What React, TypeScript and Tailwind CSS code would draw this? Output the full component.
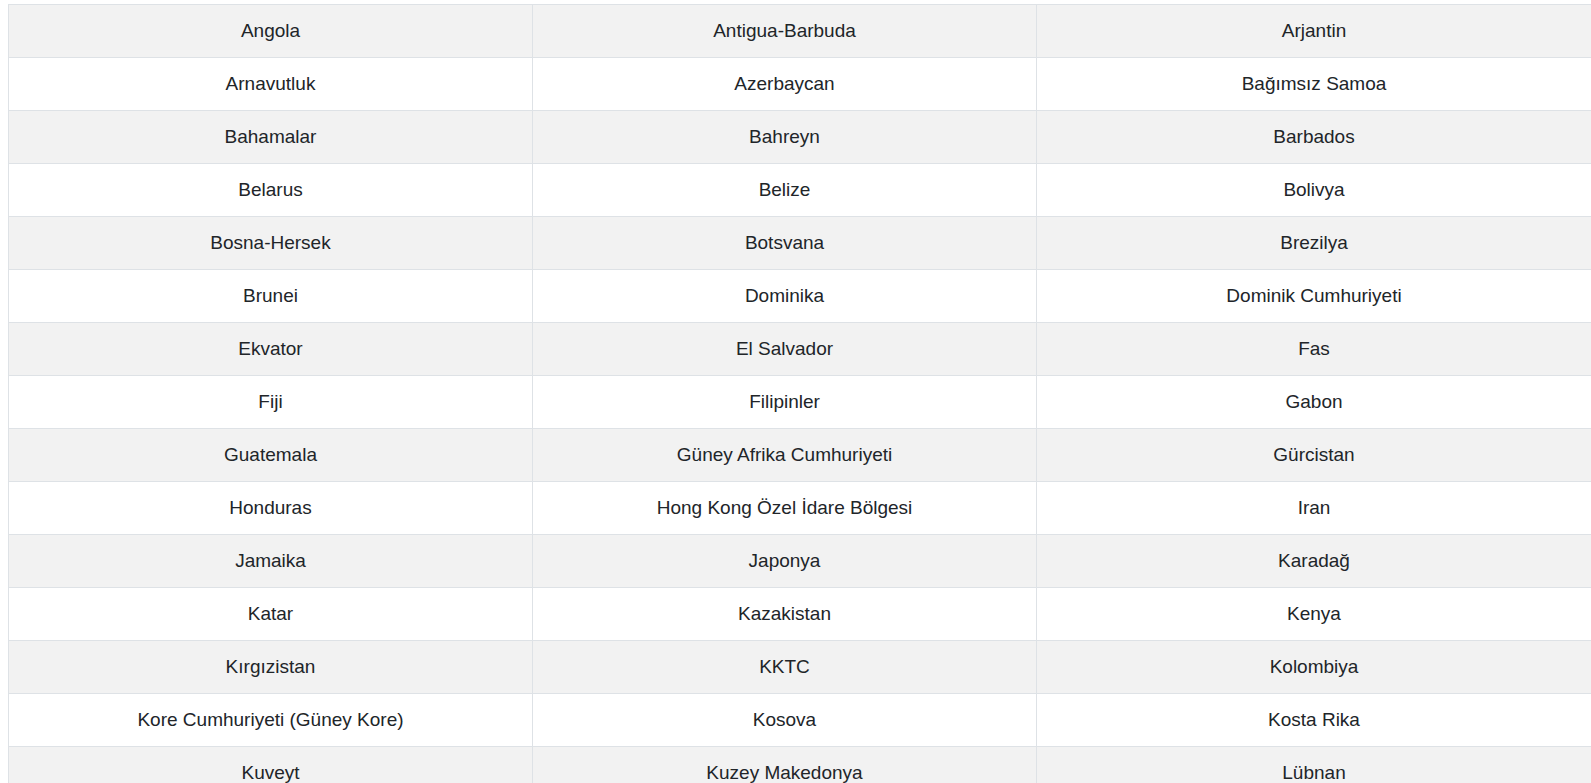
const rows: string[][] = [
  ["Angola", "Antigua-Barbuda", "Arjantin"],
  ["Arnavutluk", "Azerbaycan", "Bağımsız Samoa"],
  ["Bahamalar", "Bahreyn", "Barbados"],
  ["Belarus", "Belize", "Bolivya"],
  ["Bosna-Hersek", "Botsvana", "Brezilya"],
  ["Brunei", "Dominika", "Dominik Cumhuriyeti"],
  ["Ekvator", "El Salvador", "Fas"],
  ["Fiji", "Filipinler", "Gabon"],
  ["Guatemala", "Güney Afrika Cumhuriyeti", "Gürcistan"],
  ["Honduras", "Hong Kong Özel İdare Bölgesi", "Iran"],
  ["Jamaika", "Japonya", "Karadağ"],
  ["Katar", "Kazakistan", "Kenya"],
  ["Kırgızistan", "KKTC", "Kolombiya"],
  ["Kore Cumhuriyeti (Güney Kore)", "Kosova", "Kosta Rika"],
  ["Kuveyt", "Kuzey Makedonya", "Lübnan"],
];

export default function App() {
  return (
    <div className="min-h-screen bg-white pt-1 pl-2 font-['Liberation_Sans',Arial,sans-serif] text-[#212529]">
      <table className="w-[1583px] table-fixed border-collapse text-[19px]">
        <colgroup>
          <col className="w-[524px]" />
          <col className="w-[504px]" />
          <col className="w-[555px]" />
        </colgroup>
        <tbody>
          {rows.map((row, i) => (
            <tr key={i} className={i % 2 === 0 ? "bg-[#f2f2f2]" : "bg-white"}>
              {row.map((cell) => (
                <td
                  key={cell}
                  className="h-[53px] border border-[#dee2e6] px-3 text-center align-middle leading-6"
                >
                  {cell}
                </td>
              ))}
            </tr>
          ))}
        </tbody>
      </table>
    </div>
  );
}
